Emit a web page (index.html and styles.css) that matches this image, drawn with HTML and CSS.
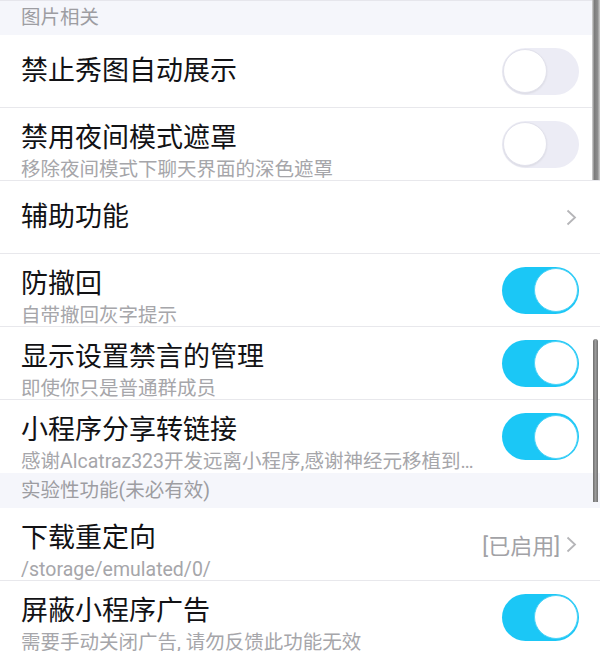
FILE: index.html
```html
<!DOCTYPE html>
<html>
<head>
    <title>设置</title>
    <meta name="viewport" content="width=device-width, initial-scale=1">
    <meta charset="UTF-8">
    <link rel="stylesheet" href="styles.css">
</head>
<body>
    <div class="page">
        <div class="group-title first">图片相关</div>

        <div class="row">
            <div class="text">
                <div class="title">禁止秀图自动展示</div>
            </div>
            <span class="switch"></span>
        </div>

        <div class="row two">
            <div class="text">
                <div class="title">禁用夜间模式遮罩</div>
                <div class="desc">移除夜间模式下聊天界面的深色遮罩</div>
            </div>
            <span class="switch"></span>
        </div>

        <div class="row">
            <div class="text">
                <div class="title">辅助功能</div>
            </div>
            <span class="more">
                <svg class="chevron" width="11" height="17" viewBox="0 0 11 17"><polyline points="1.5,1.5 9,8.5 1.5,15.5" fill="none" stroke="#b5b5b8" stroke-width="1.8"/></svg>
            </span>
        </div>

        <div class="row two">
            <div class="text">
                <div class="title">防撤回</div>
                <div class="desc">自带撤回灰字提示</div>
            </div>
            <span class="switch on"></span>
        </div>

        <div class="row two">
            <div class="text">
                <div class="title">显示设置禁言的管理</div>
                <div class="desc">即使你只是普通群成员</div>
            </div>
            <span class="switch on"></span>
        </div>

        <div class="row two last">
            <div class="text">
                <div class="title">小程序分享转链接</div>
                <div class="desc">感谢Alcatraz323开发远离小程序,感谢神经元移植到QNotified</div>
            </div>
            <span class="switch on"></span>
        </div>

        <div class="group-title">实验性功能(未必有效)</div>

        <div class="row two">
            <div class="text">
                <div class="title">下载重定向</div>
                <div class="desc">/storage/emulated/0/</div>
            </div>
            <span class="more">
                <span class="value">[已启用]</span>
                <svg class="chevron" width="11" height="17" viewBox="0 0 11 17"><polyline points="1.5,1.5 9,8.5 1.5,15.5" fill="none" stroke="#b5b5b8" stroke-width="1.8"/></svg>
            </span>
        </div>

        <div class="row two">
            <div class="text">
                <div class="title">屏蔽小程序广告</div>
                <div class="desc">需要手动关闭广告, 请勿反馈此功能无效</div>
            </div>
            <span class="switch on"></span>
        </div>

        <div class="edge-bar"></div>
        <div class="scroll-bar"></div>
    </div>
</body>
</html>
```

FILE: styles.css
```css
body {
    margin: 0;
    background-color: #ffffff;
    font-family: Roboto, "Noto Sans CJK SC", sans-serif;
    overflow: hidden;
}
.page {
    position: relative;
    width: 600px;
    height: 651px;
    overflow: hidden;
}
.group-title {
    height: 35px;
    line-height: 35px;
    padding-left: 21px;
    background-color: #f5f6fb;
    color: #9d9da2;
    font-size: 19.5px;
}
.group-title.first {
    border-top: 1px solid #e6e6ec;
    height: 34px;
    line-height: 33px;
}
.row {
    display: flex;
    align-items: center;
    height: 72px;
    padding: 0 21px;
    border-bottom: 1px solid #e8e8ec;
}
.row.last {
    border-bottom: none;
    height: 73px;
}
.text {
    flex: 1;
    min-width: 0;
    margin-right: 24px;
}
.title {
    font-size: 27px;
    line-height: 34px;
    color: #121215;
}
.row.two .text {
    align-self: flex-start;
    padding-top: 13px;
}
.desc {
    margin-top: 3px;
    font-size: 19.5px;
    line-height: 24px;
    color: #a6a6aa;
    white-space: nowrap;
    overflow: hidden;
    text-overflow: ellipsis;
}
/* переключатель */
.switch {
    position: relative;
    flex: none;
    width: 77px;
    height: 47px;
    border-radius: 24px;
    background-color: #ececf5;
}
.switch::after {
    content: "";
    position: absolute;
    top: 1.5px;
    left: 1px;
    width: 42px;
    height: 42px;
    border-radius: 50%;
    background-color: #ffffff;
    border: 1px solid #e2e2ec;
    box-shadow: 0 1px 2px rgba(0, 0, 0, 0.08);
}
.switch.on {
    background-color: #1bc7f6;
}
.switch.on::after {
    left: auto;
    right: 1px;
    border-color: #4fd3f7;
    box-shadow: none;
}
.more {
    display: flex;
    align-items: center;
    margin-right: 2px;
}
.value {
    font-size: 22px;
    color: #a2a2a6;
    margin-right: 6px;
}
.chevron {
    display: block;
}
.edge-bar {
    position: absolute;
    top: 0;
    right: 0;
    width: 8px;
    height: 180px;
    background: linear-gradient(to right, #d8d8d8, #7c7c7c 30%, #8e8e8e 70%, #cfcfcf);
}
.scroll-bar {
    position: absolute;
    top: 339px;
    right: 2px;
    width: 5px;
    height: 163px;
    border-radius: 3px 3px 0 0;
    background: linear-gradient(to right, #6e6e6e, #9a9a9a 50%, #707070);
}
```
